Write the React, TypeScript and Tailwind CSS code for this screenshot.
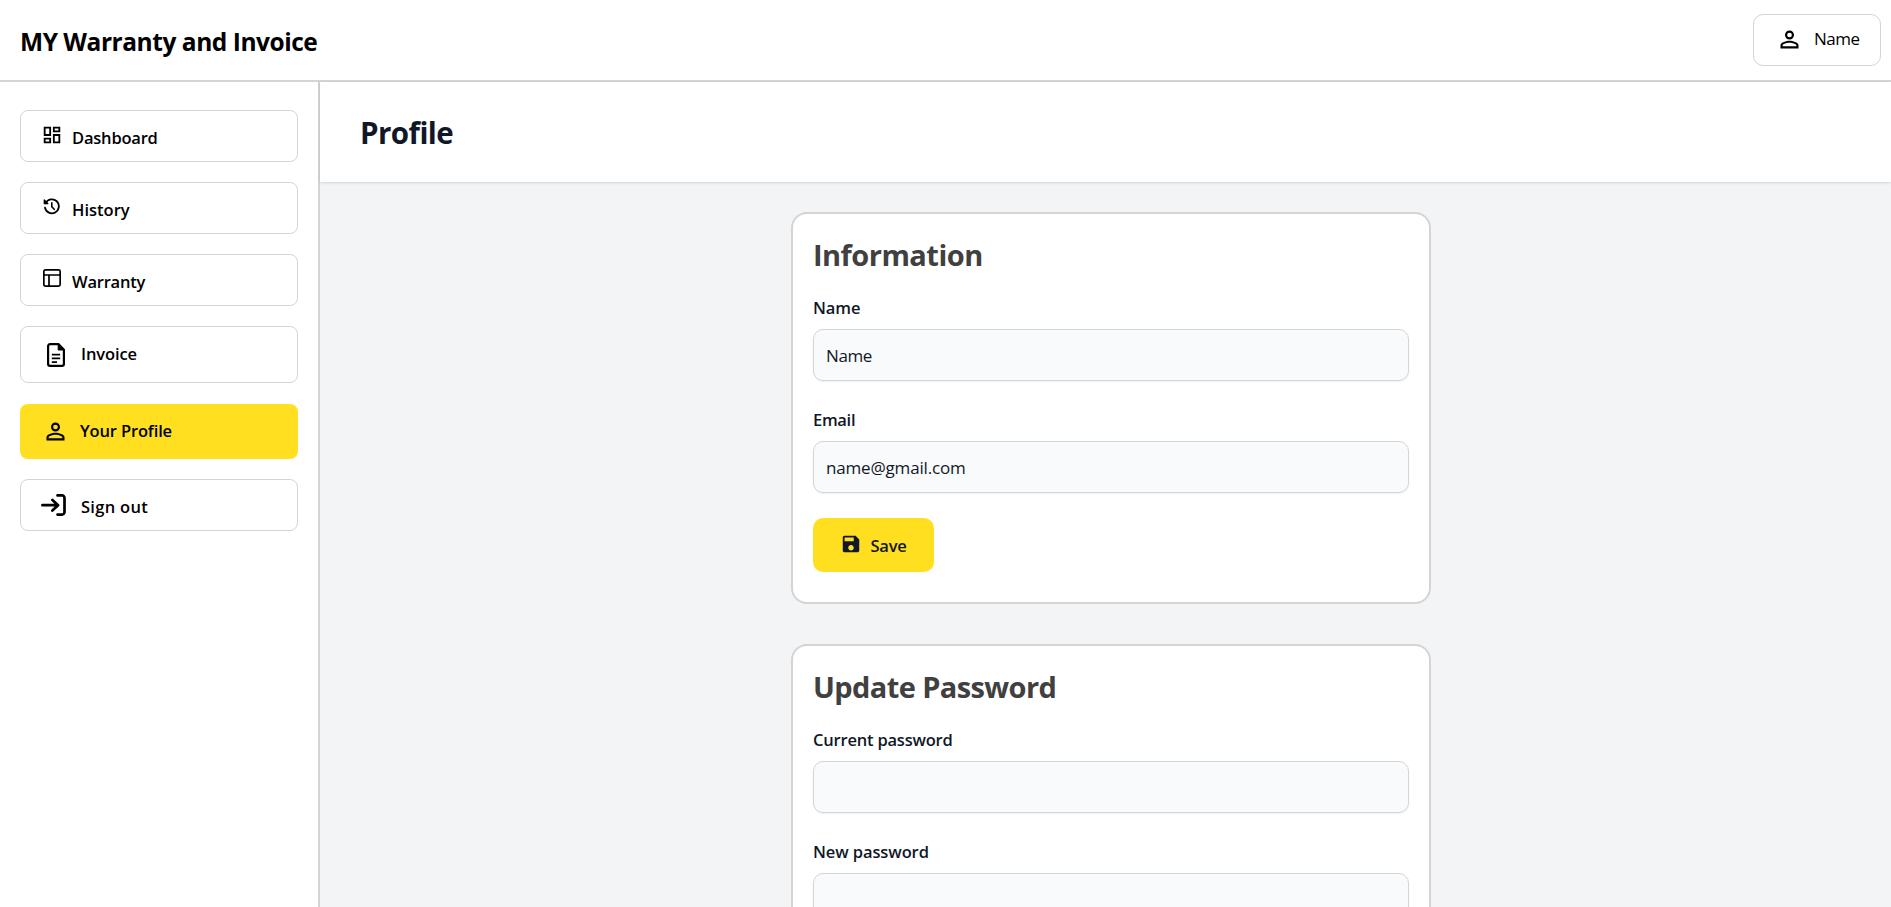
import type { ReactNode } from "react";
import { MdOutlineDashboard, MdPersonOutline, MdSave } from "react-icons/md";

function HistoryIcon() {
  return (
    <svg width="18" height="18" viewBox="0 0 18 18" fill="none" stroke="currentColor" strokeWidth="1.8" strokeLinecap="round" strokeLinejoin="round">
      <path d="M2.6 5.2A7 7 0 1 1 2 9.6" />
      <path d="M1.2 1.8V5.6H5z" fill="currentColor" strokeWidth="1.1" />
      <path d="M8.8 4.7V8.7L11.2 11.3" strokeWidth="1.6" />
    </svg>
  );
}

function LayoutIcon() {
  return (
    <svg width="18" height="18" viewBox="0 0 18 18" fill="none" stroke="currentColor" strokeWidth="1.7">
      <rect x="0.85" y="0.85" width="16.3" height="16.3" rx="1.6" />
      <path d="M0.85 6H17.15M6 6V17.15" />
    </svg>
  );
}

function InvoiceIcon() {
  return (
    <svg width="18" height="24" viewBox="0 0 18 24" fill="none" stroke="currentColor">
      <path d="M11.5 1.1H3a1.9 1.9 0 0 0-1.9 1.9v18A1.9 1.9 0 0 0 3 22.9h12a1.9 1.9 0 0 0 1.9-1.9V6.8z" strokeWidth="2.2" />
      <path d="M11.2 1v6h5.8z" fill="currentColor" strokeWidth="1" />
      <path d="M4.8 11.7h8.4M4.8 15.4h8.4M4.8 19.1h5.2" strokeWidth="1.7" />
    </svg>
  );
}

function SignOutIcon() {
  return (
    <svg width="25" height="22" viewBox="0 0 25 22" fill="none" stroke="currentColor" strokeWidth="2.7" strokeLinecap="round" strokeLinejoin="round">
      <path d="M16.5 1.4H21a2.5 2.5 0 0 1 2.5 2.5v14.2a2.5 2.5 0 0 1-2.5 2.5h-4.5" />
      <path d="M1.4 11.2h15.6M11.4 5.9l5.7 5.3-5.7 5.3" />
    </svg>
  );
}

type NavProps = { label: string; icon: ReactNode; box: string; iconBox: string; text: string };

function NavItem({ label, icon, box, iconBox, text }: NavProps) {
  return (
    <a href="#" className={`flex w-full items-start rounded-lg ${box}`}>
      <span className={`shrink-0 ${iconBox}`}>{icon}</span>
      <span className={`whitespace-nowrap text-[16.5px] leading-6 font-semibold ${text}`}>{label}</span>
    </a>
  );
}

function Field({ label, value, labelClass, inputClass = "" }: { label: string; value: string; labelClass: string; inputClass?: string }) {
  return (
    <div className="flex flex-col">
      <label className={`mb-[9px] text-[16.5px] leading-6 font-semibold ${labelClass}`}>{label}</label>
      <input
        readOnly
        value={value}
        className={`h-[52px] w-full rounded-[10px] border border-[#d1d5dc] bg-[#f9fafb] px-3 text-[17px] shadow-xs outline-none ${inputClass}`}
      />
    </div>
  );
}

export default function App() {
  return (
    <div className="flex h-[907px] flex-col overflow-hidden bg-white font-['Open_Sans','Noto_Sans',sans-serif] text-black">
      <header className="flex h-[82px] shrink-0 items-start justify-between border-b-2 border-[#d4d4d4] pr-2.5 pl-5">
        <h1 className="mt-[26px] text-[24.5px] leading-8 font-bold tracking-[-0.46px]">MY Warranty and Invoice</h1>
        <button className="mt-3.5 flex h-[52px] w-32 items-start rounded-[10px] border border-[#d4d4d4]">
          <MdPersonOutline size={27} className="mt-[11px] ml-[21.5px]" />
          <span className="mt-3 ml-[11.5px] text-[17px] leading-6 tracking-[-0.5px]">Name</span>
        </button>
      </header>
      <div className="flex min-h-0 flex-1">
        <nav className="flex w-80 shrink-0 flex-col gap-5 border-r-2 border-[#d4d4d4] px-5 pt-7">
          <NavItem label="Dashboard" icon={<MdOutlineDashboard size={22} />} box="h-[52px] border border-[#d4d4d4]" iconBox="mt-[13px] ml-[19.5px] w-[31.5px]" text="mt-[15px] tracking-[-0.2px]" />
          <NavItem label="History" icon={<HistoryIcon />} box="h-[52px] border border-[#d4d4d4]" iconBox="mt-[15px] ml-[22px] w-[29px]" text="mt-[15px]" />
          <NavItem label="Warranty" icon={<LayoutIcon />} box="h-[52px] border border-[#d4d4d4]" iconBox="mt-3.5 ml-[21.5px] w-[29.5px]" text="mt-[15px] tracking-[-0.2px]" />
          <NavItem label="Invoice" icon={<InvoiceIcon />} box="mb-px h-[57px] border border-[#d4d4d4]" iconBox="mt-4 ml-[26px] w-[34px]" text="mt-[15px] tracking-[-0.1px]" />
          <NavItem label="Your Profile" icon={<MdPersonOutline size={27} />} box="h-[55px] bg-[#ffdf20]" iconBox="mt-3.5 ml-[21.5px] w-[38.5px]" text="mt-[15px] tracking-[-0.15px]" />
          <NavItem label="Sign out" icon={<SignOutIcon />} box="h-[52px] border border-[#d4d4d4]" iconBox="mt-3.5 ml-5 w-10" text="mt-[15px] tracking-[0.3px]" />
        </nav>
        <main className="flex min-w-0 flex-1 flex-col bg-[#f3f4f6] text-[#101828]">
          <div className="h-[100px] shrink-0 bg-white pt-[33px] pl-10 shadow-sm">
            <h2 className="text-[29.5px] leading-9 font-bold tracking-[-0.55px]">Profile</h2>
          </div>
          <div className="flex min-h-0 flex-1 flex-col items-center gap-10 overflow-hidden pt-[30px] pl-[11px]">
            <section className="flex h-[392px] w-[640px] shrink-0 flex-col rounded-2xl border-2 border-[#d4d4d4] bg-white px-5 pt-[23px]">
              <h3 className="text-[29px] leading-9 font-bold tracking-[-0.52px] text-[#404040]">Information</h3>
              <div className="mt-[23px] flex flex-col gap-[27px]">
                <Field label="Name" value="Name" labelClass="tracking-[-0.1px]" inputClass="tracking-[-0.4px]" />
                <Field label="Email" value="name@gmail.com" labelClass="tracking-[-0.3px]" inputClass="tracking-[-0.17px]" />
              </div>
              <button className="mt-[25px] flex h-[54px] w-[121px] items-start rounded-[10px] bg-[#ffdf20]">
                <MdSave size={22} className="mt-[15px] ml-[26.5px]" />
                <span className="mt-4 ml-[9px] text-[16.5px] leading-6 font-semibold tracking-[-0.2px]">Save</span>
              </button>
            </section>
            <section className="flex h-[500px] w-[640px] shrink-0 flex-col rounded-2xl border-2 border-[#d4d4d4] bg-white px-5 pt-[23px]">
              <h3 className="text-[29px] leading-9 font-bold tracking-[-0.6px] text-[#404040]">Update Password</h3>
              <div className="mt-[23px] flex flex-col gap-[27px]">
                <Field label="Current password" value="" labelClass="tracking-[-0.2px]" />
                <Field label="New password" value="" labelClass="tracking-[-0.1px]" />
              </div>
            </section>
          </div>
        </main>
      </div>
    </div>
  );
}
